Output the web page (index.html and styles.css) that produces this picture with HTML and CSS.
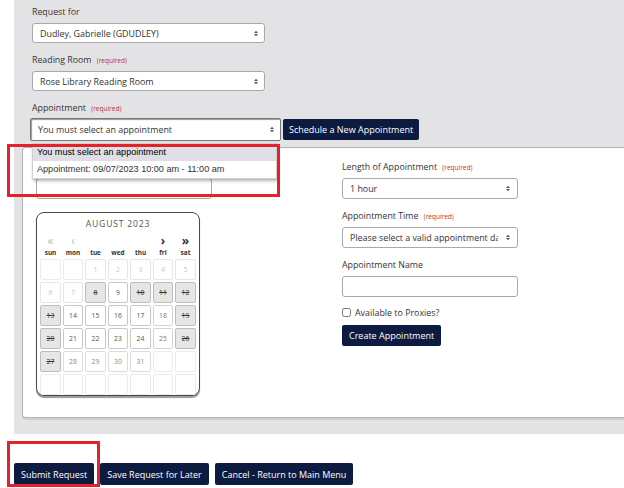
FILE: index.html
```html
<!DOCTYPE html>
<html lang="en">
<head>
<meta charset="utf-8">
<title>Request</title>
<link rel="stylesheet" href="styles.css">
</head>
<body>
<div class="main">
  <div class="fields">
    <div class="field">
      <label class="lbl">Request for</label>
      <div class="select"><span class="val">Dudley, Gabrielle (GDUDLEY)</span><svg class="arr" viewBox="0 0 5 8"><path d="M0 3.3 2.5 0.5 5 3.3Z M0 4.7 2.5 7.5 5 4.7Z"/></svg></div>
    </div>
    <div class="field">
      <label class="lbl">Reading Room <span class="req">(required)</span></label>
      <div class="select"><span class="val">Rose Library Reading Room</span><svg class="arr" viewBox="0 0 5 8"><path d="M0 3.3 2.5 0.5 5 3.3Z M0 4.7 2.5 7.5 5 4.7Z"/></svg></div>
    </div>
    <div class="field appt">
      <label class="lbl">Appointment <span class="req">(required)</span></label>
      <div class="appt-row">
        <div class="select focus"><span class="val">You must select an appointment</span><svg class="arr" viewBox="0 0 5 8"><path d="M0 3.3 2.5 0.5 5 3.3Z M0 4.7 2.5 7.5 5 4.7Z"/></svg></div>
        <button class="btn">Schedule a New Appointment</button>
      </div>
      <ul class="dropdown">
        <li class="opt sel">You must select an appointment</li>
        <li class="opt">Appointment: 09/07/2023 10:00 am - 11:00 am</li>
      </ul>
    </div>
  </div>
  <div class="panel">
    <div class="col">
      <label class="lbl hidden-lbl">Appointment Date <span class="req">(required)</span></label>
      <div class="input"></div>
      <div class="calendar">
        <div class="cal-title">AUGUST 2023</div>
        <div class="cal-nav">
          <span class="nav dis">&laquo;</span><span class="nav dis">&lsaquo;</span><span></span><span></span><span></span><span class="nav">&rsaquo;</span><span class="nav">&raquo;</span>
        </div>
        <div class="cal-days">
          <span>sun</span><span>mon</span><span>tue</span><span>wed</span><span>thu</span><span>fri</span><span>sat</span>
        </div>
        <div class="cal-grid">
          <span class="c empty"></span><span class="c empty"></span><span class="c off">1</span><span class="c off">2</span><span class="c off">3</span><span class="c off">4</span><span class="c off">5</span>
          <span class="c off">6</span><span class="c off">7</span><span class="c blk">8</span><span class="c open">9</span><span class="c blk">10</span><span class="c blk">11</span><span class="c blk">12</span>
          <span class="c blk">13</span><span class="c open">14</span><span class="c open">15</span><span class="c open">16</span><span class="c open">17</span><span class="c open lt">18</span><span class="c blk">19</span>
          <span class="c blk">20</span><span class="c open">21</span><span class="c open">22</span><span class="c open">23</span><span class="c open">24</span><span class="c open lt">25</span><span class="c blk">26</span>
          <span class="c blk">27</span><span class="c late">28</span><span class="c late">29</span><span class="c late">30</span><span class="c late">31</span><span class="c empty"></span><span class="c empty"></span>
          <span class="c empty"></span><span class="c empty"></span><span class="c empty"></span><span class="c empty"></span><span class="c empty"></span><span class="c empty"></span><span class="c empty"></span>
        </div>
      </div>
    </div>
    <div class="col">
      <label class="lbl">Length of Appointment <span class="req">(required)</span></label>
      <div class="select wide"><span class="val">1 hour</span><svg class="arr" viewBox="0 0 5 8"><path d="M0 3.3 2.5 0.5 5 3.3Z M0 4.7 2.5 7.5 5 4.7Z"/></svg></div>
      <label class="lbl gap">Appointment Time <span class="req">(required)</span></label>
      <div class="select wide"><span class="val">Please select a valid appointment date</span><svg class="arr" viewBox="0 0 5 8"><path d="M0 3.3 2.5 0.5 5 3.3Z M0 4.7 2.5 7.5 5 4.7Z"/></svg></div>
      <label class="lbl gap">Appointment Name</label>
      <div class="input"></div>
      <label class="check"><input type="checkbox"><span>Available to Proxies?</span></label>
      <button class="btn create">Create Appointment</button>
    </div>
  </div>
</div>
<div class="actions">
  <button class="btn big">Submit Request</button>
  <button class="btn big">Save Request for Later</button>
  <button class="btn big">Cancel - Return to Main Menu</button>
</div>
<div class="mark mark-drop"></div>
<div class="mark mark-submit"></div>
</body>
</html>
```

FILE: styles.css
```css
* { box-sizing: border-box; }
body {
  margin: 0;
  font-family: "Open Sans", "DejaVu Sans", sans-serif;
  color: #333;
  background: #fff;
  position: relative;
  min-height: 488px;
}
.main {
  margin-left: 14px;
  background: #e3e3e5;
  padding: 5px 0 16px 8px;
}
.fields { padding-left: 10px; }
.field { margin-bottom: 10px; }
.field.appt { position: relative; margin-bottom: 6px; }
.lbl {
  display: block;
  font-size: 8.8px;
  line-height: 14px;
  height: 14px;
  margin-bottom: 4px;
  color: #333;
  white-space: nowrap;
}
.appt .lbl { margin-bottom: 3px; }
.hidden-lbl { visibility: hidden; }
.req { font-size: 6.5px; line-height: 1; color: #c0312f; margin-left: 3px; }
.select {
  display: flex;
  align-items: center;
  width: 233px;
  height: 20px;
  border: 1px solid #a9a9a9;
  border-radius: 3px;
  background: #fff;
  padding: 0 6px 0 7px;
  font-size: 8.9px;
  color: #333;
}
.select .val { flex: 1; white-space: nowrap; overflow: hidden; }
.arr { width: 4px; height: 7px; fill: #555; flex: none; margin-left: 3px; }
.appt-row { display: flex; align-items: center; gap: 2px; margin-left: -2px; }
.select.focus {
  width: 251px;
  height: 23px;
  border: 1px solid #777;
  border-radius: 2px;
  box-shadow: inset 1px 1px 1px #999;
  padding-left: 7px;
}
.btn {
  background: #0e1b40;
  color: #fff;
  border: none;
  border-radius: 2px;
  font-family: "Open Sans", sans-serif;
  font-size: 9px;
  height: 21px;
  padding: 0 6px;
  white-space: nowrap;
}
.dropdown {
  position: absolute;
  left: 0;
  top: 42px;
  width: 245px;
  margin: 0;
  padding: 0;
  list-style: none;
  background: #fff;
  border: 1px solid #d0d0d0;
  box-shadow: 1px 2px 3px rgba(0,0,0,0.3);
  font-family: "Liberation Sans", Arial, sans-serif;
  font-size: 9.1px;
  z-index: 2;
}
.opt { height: 17px; line-height: 17px; padding: 0 4px; color: #333; white-space: nowrap; }
.opt.sel { background: #dedee4; color: #000; }
.panel {
  background: #fff;
  border: 1px solid #b3b3b3;
  border-right: none;
  border-radius: 4px 0 0 4px;
  height: 271px;
  box-shadow: 0 2px 0 #cfcfcf;
  display: grid;
  grid-template-columns: 176px 176px;
  column-gap: 130px;
  align-items: start;
  padding: 12px 0 0 13px;
}
.col { display: flex; flex-direction: column; align-items: flex-start; }
.input {
  width: 176px;
  height: 21px;
  border: 1px solid #a9a9a9;
  border-radius: 3px;
  background: #fff;
}
.select.wide { width: 176px; height: 21px; padding-right: 7px; }
.select.wide .arr { margin-left: 8px; }
.lbl.gap { margin-top: 10px; }
.calendar {
  margin-top: 13px;
  width: 164px;
  height: 184px;
  border: 1px solid #4a4a4a;
  border-radius: 8px;
  box-shadow: 0 2px 1px #9a9a9a;
  padding: 0 4px;
  background: #fff;
}
.cal-title {
  margin-top: 5px;
  line-height: 12px;
  text-align: center;
  font-size: 8.6px;
  letter-spacing: 0.8px;
  color: #555;
}
.cal-nav, .cal-days, .cal-grid {
  display: grid;
  grid-template-columns: repeat(7, 20.5px);
  column-gap: 2px;
  justify-content: center;
}
.cal-nav { margin-top: 5px; height: 12px; line-height: 12px; text-align: center; }
.nav { font-size: 12px; color: #333; font-weight: 700; }
.nav.dis { color: #bbb; font-weight: 400; }
.cal-days { margin-top: 1px; line-height: 9px; text-align: center; font-size: 6.4px; font-weight: 700; color: #333; }
.cal-grid { margin-top: 2px; row-gap: 2px; }
.c {
  height: 21px;
  display: flex;
  align-items: center;
  justify-content: center;
  font-size: 6.8px;
  border: 1px solid #ececec;
  border-radius: 2px;
  background: #fff;
  color: #666;
}
.c.off { color: #c8c8c8; border-color: #e6e6e6; }
.c.blk {
  background: #e6e6e6;
  border-color: #bdbdbd;
  color: #333;
  text-decoration: line-through;
}
.c.open { border-color: #c8c8c8; color: #555; }
.c.open.lt { border-color: #d4d4d4; color: #777; }
.c.late { border-color: #dcdcdc; color: #888; }
.check {
  margin-top: 8px;
  height: 14px;
  display: flex;
  align-items: center;
  gap: 4px;
  font-size: 8.9px;
  color: #333;
}
.check input { margin: 0; width: 9px; height: 9px; }
.btn.create { margin-top: 6px; padding: 0 7px; }
.actions {
  display: flex;
  gap: 6px;
  margin-top: 29px;
  padding-left: 14px;
}
.btn.big { height: 22px; padding: 0 7px; }
.mark {
  position: absolute;
  border: 3px solid #e4222b;
  z-index: 5;
}
.mark-drop { left: 7px; top: 144px; width: 273px; height: 53px; }
.mark-submit { left: 7px; top: 441px; width: 93px; height: 46px; }
```
